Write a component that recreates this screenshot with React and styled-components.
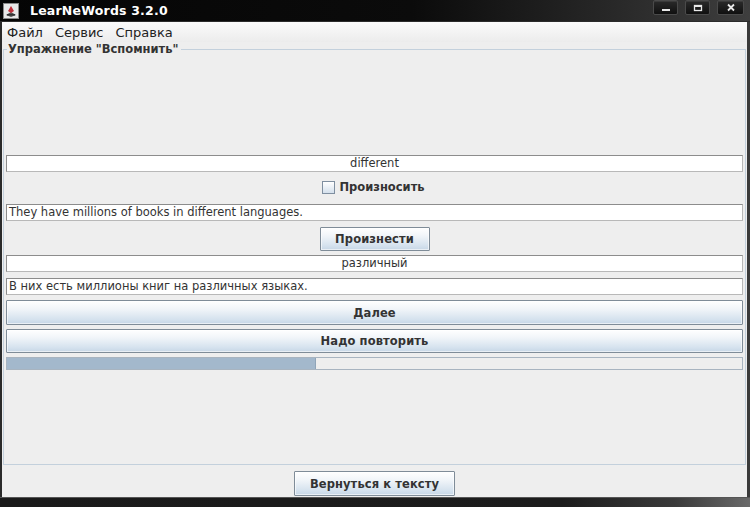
import React from "react";
import styled, { createGlobalStyle } from "styled-components";

const Global = createGlobalStyle`
  html, body { margin: 0; padding: 0; background: #eeeeee; }
  body { font-family: "DejaVu Sans", "Liberation Sans", sans-serif; font-size: 11.5px; color: #333333; }
  * { box-sizing: border-box; }
`;

const Win = styled.div`
  width: 750px;
  height: 507px;
  display: flex;
  flex-direction: column;
  background: #eeeeee;
  overflow: hidden;
`;

const TitleBar = styled.div`
  height: 22px;
  flex: none;
  display: flex;
  align-items: center;
  padding: 0 6px 0 3px;
  background: linear-gradient(90deg, #050505 0%, #0b0b0b 55%, #262626 80%, #3e3e3e 100%);
  border-bottom: 1px solid #2c2c2c;
`;

const AppIcon = styled.svg`
  width: 16px;
  height: 16px;
  flex: none;
`;

const Title = styled.div`
  margin-left: 11px;
  color: #ffffff;
  font-weight: bold;
  font-size: 12.5px;
  letter-spacing: 0.2px;
  flex: 1;
`;

const WinButtons = styled.div`
  display: flex;
  gap: 7px;
  align-items: center;
  margin-top: -6px;
`;

const WinBtn = styled.div`
  width: ${(p) => p.$w || 25}px;
  height: 15px;
  border-radius: 2px;
  border: 1px solid #4a4a4a;
  background: linear-gradient(#2a2a2a, #101010);
  box-shadow: inset 0 1px 0 #3a3a3a;
  display: flex;
  align-items: center;
  justify-content: center;
`;

const MenuBar = styled.div`
  height: 20px;
  flex: none;
  display: flex;
  align-items: center;
  padding-left: 7px;
  gap: 12px;
  background: linear-gradient(#fbfbfb, #ececec);
  border-left: 2px solid #2a2a2a;
  border-right: 3px solid #3a3a3a;
`;

const MenuItem = styled.span`
  font-size: 13px;
  color: #222;
  margin-left: ${(p) => (p.$first ? -2 : 0)}px;
`;

const Body = styled.div`
  flex: 1;
  min-height: 0;
  display: flex;
  flex-direction: column;
  border-left: 2px solid #2a2a2a;
  border-right: 3px solid #3a3a3a;
  padding: 0 1px 0 1px;
  background: #eeeeee;
`;

const Group = styled.fieldset`
  flex: 1;
  min-height: 0;
  margin: 0;
  padding: 98px 2px 0 2px;
  border: 1px solid #c3d0dc;
  display: flex;
  flex-direction: column;
`;

const Legend = styled.legend`
  font-weight: bold;
  font-size: 11.5px;
  color: #333;
  padding: 0 2px 0 1px;
  margin-left: 1px;
  line-height: 15px;
`;

const Field = styled.div`
  height: 17px;
  flex: none;
  margin-top: ${(p) => p.$mt || 0}px;
  background: #ffffff;
  border: 1px solid #8c8c8c;
  border-right-color: #b8b8b8;
  border-bottom-color: #b8b8b8;
  padding: 0 2px;
  line-height: 15px;
  font-size: 11.5px;
  color: #333;
  text-align: ${(p) => (p.$center ? "center" : "left")};
  white-space: nowrap;
`;

const CheckRow = styled.label`
  height: 24px;
  flex: none;
  margin-top: 3px;
  display: flex;
  align-items: center;
  justify-content: center;
  gap: 4px;
  font-weight: bold;
  font-size: 11.5px;
  color: #333;
  padding-right: 2px;
`;

const Box = styled.span`
  width: 13px;
  height: 13px;
  border: 1px solid #7f8fa0;
  background: linear-gradient(#ffffff, #d4e0ec);
  display: inline-block;
`;

const Button = styled.div`
  flex: none;
  height: ${(p) => p.$h || 24}px;
  margin-top: ${(p) => p.$mt || 0}px;
  align-self: ${(p) => (p.$full ? "stretch" : "center")};
  width: ${(p) => (p.$w ? p.$w + "px" : "auto")};
  display: flex;
  align-items: center;
  justify-content: center;
  border: 1px solid #7f8c98;
  border-radius: 1px;
  background: linear-gradient(#ffffff 0%, #f1f5f9 35%, #d5e2ee 80%, #c6d6e6 100%);
  box-shadow: inset 0 0 0 1px rgba(255, 255, 255, 0.6);
  font-weight: bold;
  font-size: 11.5px;
  color: #333;
  letter-spacing: 0.1px;
`;

const Progress = styled.div`
  height: 13px;
  margin-top: 4px;
  flex: none;
  border: 1px solid #a8b4c0;
  background: #eeeeee;
  display: flex;
`;

const ProgressFill = styled.div`
  height: 100%;
  background: #a3b8cc;
  border-right: 1px solid #8fa4b8;
`;

const Footer = styled.div`
  height: 32px;
  flex: none;
  display: flex;
  align-items: flex-start;
  justify-content: center;
  padding-top: 5px;
`;

const BottomBar = styled.div`
  height: 10px;
  flex: none;
  background: linear-gradient(90deg, #1a1a1a 0%, #1c1c1c 75%, #3a3a3a 90%, #6a6a6a 100%);
  border-top: 1px solid #555;
`;

export default function App() {
  const progress = 42;
  return (
    <>
      <Global />
      <Win>
        <TitleBar>
          <AppIcon viewBox="0 0 16 16">
            <rect x="0.5" y="0.5" width="15" height="15" fill="#e8e8e8" stroke="#888" />
            <path d="M3 12 L8 9 L13 12 L8 14 Z" fill="#555" />
            <path d="M5 8 L8 3 L11 8 L8 10 Z" fill="#c0303a" />
            <rect x="4" y="11" width="8" height="1.5" fill="#333" />
          </AppIcon>
          <Title>LearNeWords 3.2.0</Title>
          <WinButtons>
            <WinBtn $w={25}>
              <svg width="10" height="8" viewBox="0 0 10 8">
                <rect x="1" y="5" width="8" height="2" fill="#e8e8e8" />
              </svg>
            </WinBtn>
            <WinBtn $w={25}>
              <svg width="10" height="8" viewBox="0 0 10 8">
                <rect x="1.5" y="1.5" width="7" height="5" fill="none" stroke="#e8e8e8" strokeWidth="1.3" />
                <rect x="1" y="1" width="8" height="2" fill="#e8e8e8" />
              </svg>
            </WinBtn>
            <WinBtn $w={27}>
              <svg width="10" height="9" viewBox="0 0 10 9">
                <path d="M2 1.5 L8 7.5 M8 1.5 L2 7.5" stroke="#e8e8e8" strokeWidth="1.8" />
              </svg>
            </WinBtn>
          </WinButtons>
        </TitleBar>
        <MenuBar>
          <MenuItem $first>Файл</MenuItem>
          <MenuItem>Сервис</MenuItem>
          <MenuItem>Справка</MenuItem>
        </MenuBar>
        <Body>
          <Group>
            <Legend>Упражнение "Вспомнить"</Legend>
            <Field $center>different</Field>
            <CheckRow>
              <Box />
              Произносить
            </CheckRow>
            <Field $mt={5}>They have millions of books in different languages.</Field>
            <Button $mt={6} $w={110} $h={24}>Произнести</Button>
            <Field $mt={4} $center>различный</Field>
            <Field $mt={6}>В них есть миллионы книг на различных языках.</Field>
            <Button $mt={5} $full $h={25}>Далее</Button>
            <Button $mt={4} $full $h={24}>Надо повторить</Button>
            <Progress>
              <ProgressFill style={{ width: `${progress}%` }} />
            </Progress>
          </Group>
          <Footer>
            <Button $w={161} $h={25}>Вернуться к тексту</Button>
          </Footer>
        </Body>
        <BottomBar />
      </Win>
    </>
  );
}
